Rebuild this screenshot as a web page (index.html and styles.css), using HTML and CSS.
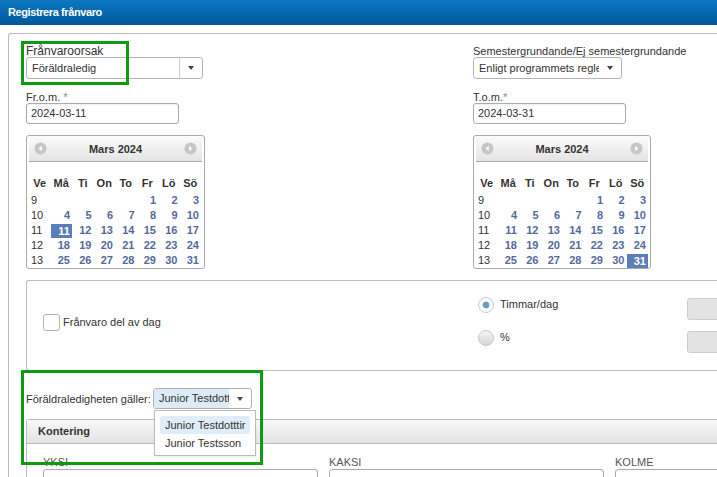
FILE: index.html
```html
<!DOCTYPE html>
<html lang="sv">
<head>
<meta charset="utf-8">
<title>Registrera frånvaro</title>
<link rel="stylesheet" href="styles.css">
</head>
<body>
<div class="titlebar">Registrera frånvaro</div>
<div class="panel">
  <div class="top">
    <div class="col col-left">
      <div class="field">
        <label class="lbl lbl-lg">Frånvaroorsak</label>
        <div class="select select-cause"><span class="sel-text">Föräldraledig</span><span class="sel-btn divided"><i class="caret"></i></span></div>
      </div>
      <div class="field field-date">
        <label class="lbl">Fr.o.m. <span class="req">*</span></label>
        <div class="input date">2024-03-11</div>
      </div>
      <div class="cal cal-left">
        <div class="cal-head">
          <svg class="cal-nav" width="13" height="13" viewBox="0 0 13 13"><circle cx="6.5" cy="6.5" r="6" fill="#c6c6c6"/><polygon points="7.8,3.8 4.6,6.5 7.8,9.2" fill="#fff"/></svg>
          <span class="cal-title">Mars 2024</span>
          <svg class="cal-nav" width="13" height="13" viewBox="0 0 13 13"><circle cx="6.5" cy="6.5" r="6" fill="#c6c6c6"/><polygon points="5.2,3.8 8.4,6.5 5.2,9.2" fill="#fff"/></svg>
        </div>
        <table class="cal-grid">
          <thead><tr><th>Ve</th><th>Må</th><th>Ti</th><th>On</th><th>To</th><th>Fr</th><th>Lö</th><th>Sö</th></tr></thead>
          <tbody>
            <tr><td class="wk">9</td><td></td><td></td><td></td><td></td><td>1</td><td>2</td><td>3</td></tr>
            <tr><td class="wk">10</td><td>4</td><td>5</td><td>6</td><td>7</td><td>8</td><td>9</td><td>10</td></tr>
            <tr><td class="wk">11</td><td class="sel"><span>11</span></td><td>12</td><td>13</td><td>14</td><td>15</td><td>16</td><td>17</td></tr>
            <tr><td class="wk">12</td><td>18</td><td>19</td><td>20</td><td>21</td><td>22</td><td>23</td><td>24</td></tr>
            <tr><td class="wk">13</td><td>25</td><td>26</td><td>27</td><td>28</td><td>29</td><td>30</td><td>31</td></tr>
          </tbody>
        </table>
      </div>
    </div>
    <div class="col col-right">
      <div class="field">
        <label class="lbl">Semestergrundande/Ej semestergrundande</label>
        <div class="select select-sem"><span class="sel-text">Enligt programmets regler</span><span class="sel-btn"><i class="caret"></i></span></div>
      </div>
      <div class="field field-date">
        <label class="lbl">T.o.m.<span class="req">*</span></label>
        <div class="input date">2024-03-31</div>
      </div>
      <div class="cal cal-right">
        <div class="cal-head">
          <svg class="cal-nav" width="13" height="13" viewBox="0 0 13 13"><circle cx="6.5" cy="6.5" r="6" fill="#c6c6c6"/><polygon points="7.8,3.8 4.6,6.5 7.8,9.2" fill="#fff"/></svg>
          <span class="cal-title">Mars 2024</span>
          <svg class="cal-nav" width="13" height="13" viewBox="0 0 13 13"><circle cx="6.5" cy="6.5" r="6" fill="#c6c6c6"/><polygon points="5.2,3.8 8.4,6.5 5.2,9.2" fill="#fff"/></svg>
        </div>
        <table class="cal-grid">
          <thead><tr><th>Ve</th><th>Må</th><th>Ti</th><th>On</th><th>To</th><th>Fr</th><th>Lö</th><th>Sö</th></tr></thead>
          <tbody>
            <tr><td class="wk">9</td><td></td><td></td><td></td><td></td><td>1</td><td>2</td><td>3</td></tr>
            <tr><td class="wk">10</td><td>4</td><td>5</td><td>6</td><td>7</td><td>8</td><td>9</td><td>10</td></tr>
            <tr><td class="wk">11</td><td>11</td><td>12</td><td>13</td><td>14</td><td>15</td><td>16</td><td>17</td></tr>
            <tr><td class="wk">12</td><td>18</td><td>19</td><td>20</td><td>21</td><td>22</td><td>23</td><td>24</td></tr>
            <tr><td class="wk">13</td><td>25</td><td>26</td><td>27</td><td>28</td><td>29</td><td>30</td><td class="sel"><span>31</span></td></tr>
          </tbody>
        </table>
      </div>
    </div>
  </div>

  <div class="partday">
    <div class="pd-left">
      <span class="checkbox"></span>
      <span class="cb-label">Frånvaro del av dag</span>
    </div>
    <div class="pd-right">
      <div class="radio-row">
        <span class="radio radio-on"></span>
        <span class="radio-label">Timmar/dag</span>
        <span class="grayinput"></span>
      </div>
      <div class="radio-row">
        <span class="radio radio-off"></span>
        <span class="radio-label">%</span>
        <span class="grayinput"></span>
      </div>
    </div>
  </div>

  <div class="parent-row">
    <span class="parent-label">Föräldraledigheten gäller:</span>
    <div class="select-child"><span class="sc-text">Junior Testdotttir</span><span class="sc-btn"><i class="caret"></i></span></div>
  </div>

  <div class="kontering">
    <div class="k-head">Kontering</div>
    <div class="k-body">
      <div class="k-field"><label class="k-label">YKSI</label><div class="k-input"></div></div>
      <div class="k-field"><label class="k-label">KAKSI</label><div class="k-input"></div></div>
      <div class="k-field"><label class="k-label">KOLME</label><div class="k-input"></div></div>
    </div>
  </div>
</div>

<div class="dropdown">
  <div class="dd-item dd-active">Junior Testdotttir</div>
  <div class="dd-item">Junior Testsson</div>
</div>

<div class="hl hl-1"></div>
<div class="hl hl-2"></div>
</body>
</html>
```

FILE: styles.css
```css
body {
  margin: 0;
  width: 717px;
  height: 477px;
  overflow: hidden;
  position: relative;
  font-family: "Liberation Sans", Arial, sans-serif;
  font-size: 11px;
  color: #333;
  background: #fff;
}

.titlebar {
  height: 25px;
  line-height: 25px;
  padding-left: 8px;
  background: linear-gradient(#0b78c1, #00589a);
  color: #fff;
  font-weight: bold;
  font-size: 11px;
  letter-spacing: -0.4px;
}

.panel {
  margin: 8px 0 0 8px;
  width: 760px;
  height: 470px;
  box-sizing: border-box;
  border: 1px solid #bbb;
  border-right: 0;
  border-bottom: 0;
  border-top-left-radius: 3px;
  padding: 11px 0 0 17px;
}

.top { display: flex; }
.col-left { width: 447px; }

.lbl {
  display: block;
  height: 12px;
  line-height: 12px;
  white-space: nowrap;
}
.lbl-lg { font-size: 12px; }
.req { color: #6e9e5a; }

.select {
  display: flex;
  height: 22px;
  box-sizing: border-box;
  border: 1px solid #b5b5b5;
  border-radius: 3px;
  background: #fff;
  overflow: hidden;
}
.select-cause { width: 177px; }
.select-sem { width: 149px; }
.sel-text {
  flex: 1;
  padding-left: 5px;
  line-height: 20px;
  white-space: nowrap;
  overflow: hidden;
}
.sel-btn {
  width: 22px;
  display: flex;
  align-items: center;
  justify-content: center;
  flex-shrink: 0;
}
.sel-btn.divided { border-left: 1px solid #ccc; }

.caret {
  width: 0;
  height: 0;
  border-left: 3.5px solid transparent;
  border-right: 3.5px solid transparent;
  border-top: 4px solid #444;
}

.field-date { margin-top: 12px; }
.input {
  height: 21px;
  box-sizing: border-box;
  border: 1px solid #aaa;
  border-radius: 3px;
  padding-left: 4px;
  line-height: 19px;
  box-shadow: inset 0 1px 1px rgba(0, 0, 0, 0.06);
}
.date { width: 153px; }

.cal {
  margin-top: 11px;
  box-sizing: border-box;
  border: 1px solid #aaa;
  border-radius: 3px;
  padding: 0 2px;
}
.cal-left { width: 179px; }
.cal-right { width: 178px; }

.cal-head {
  height: 25px;
  border-bottom: 1px solid #aaa;
  background: linear-gradient(#fbfbfb, #e4e4e4);
  display: flex;
  align-items: center;
  justify-content: space-between;
  padding: 0 5px;
}
.cal-nav { display: block; }
.cal-title { font-weight: bold; font-size: 11px; }

.cal-grid {
  border-collapse: collapse;
  table-layout: fixed;
  width: 172px;
  margin-top: 11px;
}
.cal-grid th {
  height: 20px;
  padding: 0;
  font-weight: bold;
  text-align: center;
  width: 21.5px;
}
.cal-grid td {
  height: 15px;
  line-height: 15px;
  padding: 0 2px 0 0;
  font-weight: bold;
  color: #56699c;
  text-align: right;
}
.cal-grid td.wk {
  text-align: left;
  padding: 0 0 0 2px;
  font-weight: normal;
  color: #333;
}
.cal-grid td.sel { padding: 0; }
.cal-grid td.sel span {
  display: block;
  height: 14px;
  line-height: 14px;
  margin-top: 1px;
  padding-right: 2px;
  background: #5b7db8;
  color: #fff;
}

.partday {
  margin-top: 11px;
  width: 740px;
  height: 91px;
  box-sizing: border-box;
  border: 1px solid #bbb;
  border-right: 0;
  border-radius: 3px 0 0 3px;
  display: flex;
}
.pd-left {
  width: 446px;
  box-sizing: border-box;
  padding: 33px 0 0 16px;
  display: flex;
  align-items: flex-start;
}
.checkbox {
  width: 17px;
  height: 17px;
  box-sizing: border-box;
  border: 1px solid #b5b5b5;
  border-radius: 3px;
  background: #fff;
}
.cb-label {
  margin-left: 3px;
  line-height: 17px;
}

.pd-right { padding-top: 17px; }
.radio-row {
  display: flex;
  height: 22px;
  align-items: flex-start;
}
.radio-row + .radio-row { margin-top: 11px; }
.radio {
  width: 16px;
  height: 16px;
  margin: -1px 0 0 5px;
  box-sizing: border-box;
  border-radius: 50%;
  border: 1px solid #c8c8c8;
}
.radio-on { background: radial-gradient(circle, #6b9bc8 0, #6b9bc8 3px, #fff 3.8px); }
.radio-off { background: linear-gradient(#f4f4f4, #d5d5d5); }
.radio-label {
  width: 187px;
  margin: -2px 0 0 6px;
  line-height: 16px;
}
.grayinput {
  width: 60px;
  height: 22px;
  box-sizing: border-box;
  border: 1px solid #ccc;
  border-radius: 3px;
  background: #e3e3e3;
}

.parent-row {
  display: flex;
  align-items: center;
  margin-top: 17px;
  height: 21px;
}
.parent-label {
  width: 127px;
  white-space: nowrap;
  flex-shrink: 0;
}
.select-child {
  width: 99px;
  height: 21px;
  box-sizing: border-box;
  border: 1px solid #b0b0b0;
  border-radius: 3px;
  display: flex;
  overflow: hidden;
}
.sc-text {
  width: 75px;
  box-sizing: border-box;
  padding-left: 5px;
  background: #dcebf8;
  line-height: 19px;
  white-space: nowrap;
  overflow: hidden;
}
.sc-btn {
  flex: 1;
  display: flex;
  align-items: center;
  justify-content: center;
}

.kontering {
  margin-top: 10px;
  width: 740px;
  border: 1px solid #bbb;
  border-right: 0;
  border-radius: 3px 0 0 0;
  height: 80px;
}
.k-head {
  height: 23px;
  line-height: 23px;
  background: linear-gradient(#f8f8f8, #e3e3e3);
  border-bottom: 1px solid #bbb;
  font-weight: bold;
  padding-left: 11px;
}
.k-body {
  display: flex;
  gap: 11px;
  padding: 12px 0 0 16px;
}
.k-label {
  display: block;
  height: 13px;
  line-height: 13px;
  color: #555;
}
.k-input {
  width: 275px;
  height: 22px;
  box-sizing: border-box;
  border: 1px solid #aaa;
  border-radius: 3px;
}

.dropdown {
  position: absolute;
  left: 154px;
  top: 410px;
  width: 102px;
  height: 46px;
  box-sizing: border-box;
  border: 1px solid #bbb;
  background: #fff;
  padding: 5px 0 0 5px;
  box-shadow: 0 1px 2px rgba(0, 0, 0, 0.08);
}
.dd-item {
  width: 90px;
  height: 18px;
  line-height: 18px;
  box-sizing: border-box;
  padding-left: 5px;
  white-space: nowrap;
}
.dd-active {
  background: #deedf9;
  border-radius: 3px;
}

.hl {
  position: absolute;
  border: 3px solid #0f9b0f;
  box-sizing: border-box;
  pointer-events: none;
}
.hl-1 { left: 21px; top: 41px; width: 108px; height: 44px; }
.hl-2 { left: 21px; top: 370px; width: 242px; height: 95px; }
```
